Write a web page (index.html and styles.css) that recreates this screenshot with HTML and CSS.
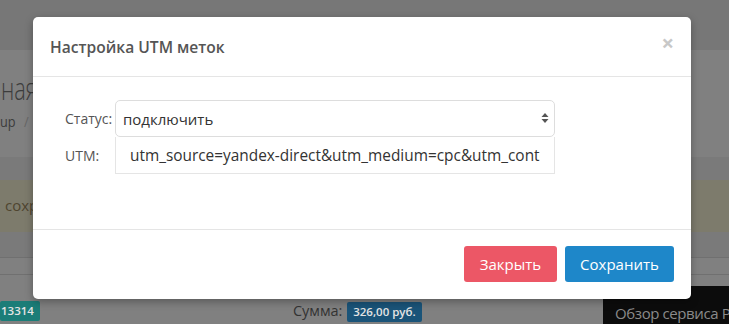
FILE: index.html
```html
<!DOCTYPE html>
<html lang="ru">
<head>
    <meta charset="UTF-8">
    <title>Настройка UTM меток</title>
    <link rel="stylesheet" href="styles.css">
</head>
<body>
    <!-- page behind the backdrop -->
    <div class="page">
        <div class="topbar"></div>
        <div class="heading">
            <div class="page-title">ная</div>
            <div class="crumbs">up <span class="sep">/</span></div>
        </div>
        <div class="band"></div>
        <div class="alert">сохр</div>
        <div class="band short"></div>
        <div class="row"></div>
        <div class="row"></div>
        <div class="order-row">
            <span class="badge teal">13314</span>
            <span class="sum">Сумма: <span class="badge blue">326,00 руб.</span></span>
        </div>
        <div class="video">Обзор сервиса Р</div>
    </div>

    <div class="modal">
        <div class="modal-header">
            <h4>Настройка UTM меток</h4>
            <span class="close">&times;</span>
        </div>
        <div class="modal-body">
            <label for="status">Статус:</label>
            <div class="select-wrap">
                <select id="status">
                    <option>подключить</option>
                    <option>отключить</option>
                </select>
                <svg class="arrows" width="8" height="12" viewBox="0 0 8 12">
                    <path d="M4 1 L7.5 5 H0.5 Z" fill="#555"/>
                    <path d="M4 11 L7.5 7 H0.5 Z" fill="#555"/>
                </svg>
            </div>
            <label for="utm">UTM:</label>
            <input id="utm" type="text" value="utm_source=yandex-direct&amp;utm_medium=cpc&amp;utm_content={ad_id}">
        </div>
        <div class="modal-footer">
            <button class="btn btn-red">Закрыть</button>
            <button class="btn btn-blue">Сохранить</button>
        </div>
    </div>
</body>
</html>
```

FILE: styles.css
```css
body { margin: 0; font-family: "Open Sans", Arial, sans-serif; background: #808080; width: 729px; height: 324px; overflow: hidden; position: relative; }

.page { height: 324px; position: relative; }
.topbar { height: 50px; background: #777; }
.heading { height: 107px; background: #808080; overflow: hidden; }
.page-title { font-size: 32px; font-weight: 300; color: #3c3c3c; margin: 21px 0 0 1px; line-height: 34px; transform: scaleX(0.68); transform-origin: left; }
.crumbs { font-size: 15px; color: #3c3c3c; margin: 6px 0 0 0; line-height: 20px; transform: scaleX(0.85); transform-origin: left; }
.crumbs .sep { color: #666; margin-left: 6px; }
.band { height: 23px; background: #7a7a7a; }
.band.short { height: 25px; }
.alert { height: 52px; background: #7d7b6c; color: #4f4530; font-size: 15px; line-height: 50px; padding-left: 5px; white-space: nowrap; }
.row { height: 16px; border-top: 1px solid #707070; background: #808080; }
.order-row { height: 40px; display: flex; align-items: center; }
.badge { display: inline-block; font-size: 11.5px; font-weight: 600; color: #e4e4e4; padding: 0 6px; height: 20px; line-height: 20px; border-radius: 2px; }
.badge.teal { background: #1b7d78; padding: 0 6px 0 1px; }
.badge.blue { background: #1a5479; margin-left: 1px; }
.sum { font-size: 14.5px; color: #333; margin-left: 253px; }
.video { position: absolute; left: 603px; top: 286px; width: 126px; height: 38px; background: #0c0c0c; color: #8a8a8a; font-size: 15px; padding: 16px 0 0 12px; box-sizing: border-box; white-space: nowrap; line-height: 22px; letter-spacing: -0.4px; }

.modal { position: absolute; left: 33px; top: 17px; width: 658px; background: #fff; border-radius: 5px; box-shadow: 0 3px 9px rgba(0,0,0,0.3); }
.modal-header { height: 60px; border-bottom: 1px solid #e5e5e5; box-sizing: border-box; padding: 0 17px; display: flex; align-items: center; justify-content: space-between; }
.modal-header h4 { margin: 0; font-size: 15.6px; font-weight: 600; color: #555; }
.close { font-size: 22px; font-weight: 700; color: #c8c8c8; margin-top: -10px; }

.modal-body { height: 152px; box-sizing: border-box; padding: 23px 0 0 32px; display: grid; grid-template-columns: 50px 440px; grid-template-rows: 37px 37px; align-content: start; align-items: center; }
.modal-body label { font-size: 14px; color: #555; }
.select-wrap { position: relative; height: 37px; }
.select-wrap select { appearance: none; -webkit-appearance: none; width: 100%; height: 37px; border: 1px solid #ddd; border-radius: 5px; background: #fff; font-family: inherit; font-size: 15px; color: #333; padding: 0 7px; outline: none; }
.arrows { position: absolute; right: 6px; top: 12px; }
.modal-body input { width: 100%; height: 37px; box-sizing: border-box; border: 1px solid #e5e5e5; border-top: 0; border-radius: 0; font-family: inherit; font-size: 15.4px; color: #333; padding: 0 14px; outline: none; }

.modal-footer { border-top: 1px solid #e5e5e5; padding: 16px 17px 17px; display: flex; justify-content: flex-end; gap: 8px; }
.btn { height: 36px; border: 0; border-radius: 3px; color: #fff; font-family: inherit; font-size: 15px; padding: 0 14px; }
.btn-red { background: #ec5766; width: 93px; }
.btn-blue { background: #1e87c9; width: 109px; }
```
